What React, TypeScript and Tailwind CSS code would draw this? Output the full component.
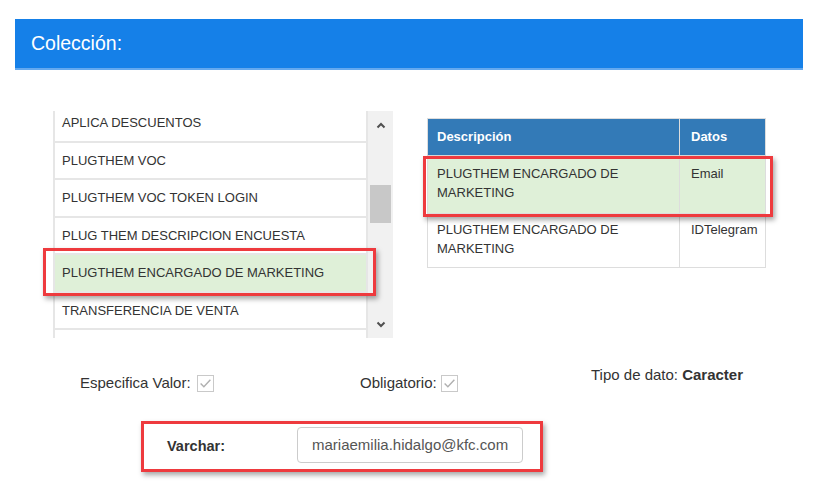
import React from 'react';

const items = [
  'APLICA DESCUENTOS',
  'PLUGTHEM VOC',
  'PLUGTHEM VOC TOKEN LOGIN',
  'PLUG THEM DESCRIPCION ENCUESTA',
  'PLUGTHEM ENCARGADO DE MARKETING',
  'TRANSFERENCIA DE VENTA',
  '',
];

const rows = [
  { desc: 'PLUGTHEM ENCARGADO DE MARKETING', datos: 'Email', active: true },
  { desc: 'PLUGTHEM ENCARGADO DE MARKETING', datos: 'IDTelegram', active: false },
];

const Chevron: React.FC<{ up?: boolean }> = ({ up }) => (
  <svg width="10" height="7" viewBox="0 0 10 7">
    <polyline
      points={up ? '1.5,5.5 5,2 8.5,5.5' : '1.5,1.5 5,5 8.5,1.5'}
      fill="none"
      stroke="#505050"
      strokeWidth="2"
    />
  </svg>
);

const DisabledCheck: React.FC = () => (
  <span className="inline-flex h-[17px] w-[17px] items-center justify-center border border-[#c9c9c9] bg-white">
    <svg width="13" height="11" viewBox="0 0 12 10">
      <polyline points="1.5,5 4.5,8 10.5,1.5" fill="none" stroke="#b0b0b0" strokeWidth="1.3" />
    </svg>
  </span>
);

export default function App() {
  return (
    <div className="h-[498px] w-[830px] overflow-hidden bg-white pt-[19px] font-['Liberation_Sans',Arial,sans-serif] text-[#333]">
      {/* Header */}
      <div className="ml-[15px] flex h-[51px] w-[788px] items-center border-b-2 border-[#64a9ef] bg-[#1580e8] pl-[16px]">
        <span className="text-[19.5px] text-white">Colección:</span>
      </div>

      {/* List + table */}
      <div className="mt-[41px] flex items-start">
        <div className="relative ml-[53px] flex h-[227px] w-[340px]">
          <div className="h-full w-[315px] overflow-hidden border-l-2 border-r-2 border-[#e6e6e6]">
            <ul className="-mt-[6px]">
              {items.map((item, i) => {
                const active = item === 'PLUGTHEM ENCARGADO DE MARKETING';
                return (
                  <li
                    key={i}
                    className={`flex h-[37.5px] items-center border-b-2 border-[#e6e6e6] pl-[7px] text-[13px] ${
                      active ? 'bg-[#dff0d8]' : 'bg-white'
                    }`}
                  >
                    {item}
                  </li>
                );
              })}
            </ul>
          </div>
          <div className="flex h-full w-[25px] flex-col items-center bg-[#f1f1f1] pt-[11px]">
            <Chevron up />
            <div className="mt-[56px] h-[38px] w-[21px] bg-[#c8c8c8]" />
            <div className="flex-1" />
            <div className="mb-[10px]">
              <Chevron />
            </div>
          </div>
          {/* highlight annotation */}
          <span className="absolute -left-[10px] top-[137px] h-[48px] w-[333px] border-[3px] border-[#ee3a3e] shadow-[2px_3px_5px_rgba(0,0,0,0.35)]" />
        </div>

        <div className="relative ml-[34px] mt-[7px] w-[339px]">
          <table className="w-full table-fixed border-collapse text-[13px]">
            <colgroup>
              <col className="w-[252px]" />
              <col />
            </colgroup>
            <thead>
              <tr className="h-[37px] bg-[#337ab7] text-left text-white">
                <th className="border border-[#dddddd] px-[9px] font-bold">Descripción</th>
                <th className="border border-[#dddddd] px-[11px] font-bold">Datos</th>
              </tr>
            </thead>
            <tbody>
              {rows.map((r, i) => (
                <tr key={i} className={r.active ? 'bg-[#dff0d8]' : 'bg-white'}>
                  <td className={`border border-[#dddddd] px-[9px] align-top leading-[19px] ${r.active ? 'pb-[11px] pt-[8px]' : 'pb-[9px] pt-[6px]'}`}>
                    PLUGTHEM ENCARGADO DE
                    <br />
                    MARKETING
                  </td>
                  <td className={`whitespace-nowrap border border-[#dddddd] px-[11px] align-top leading-[19px] ${r.active ? 'pt-[8px]' : 'pt-[6px]'}`}>
                    {r.datos}
                  </td>
                </tr>
              ))}
            </tbody>
          </table>
          <span className="absolute -left-[4px] top-[38px] h-[61px] w-[350px] border-[3px] border-[#ee3a3e] shadow-[2px_3px_5px_rgba(0,0,0,0.35)]" />
        </div>
      </div>

      {/* Checkbox row */}
      <div className="mt-[27px] flex items-start text-[15px] leading-[20px]">
        <div className="ml-[80px] flex w-[280px] items-center gap-[6px] pt-[8px]">
          <span>Especifica Valor:</span>
          <DisabledCheck />
        </div>
        <div className="flex w-[231px] items-center gap-[4px] pt-[8px]">
          <span>Obligatorio:</span>
          <DisabledCheck />
        </div>
        <div>
          Tipo de dato: <span className="font-bold">Caracter</span>
        </div>
      </div>

      {/* Varchar */}
      <div className="ml-[141px] mt-[28px] flex h-[51px] w-[402px] items-start border-[3px] border-[#ee3a3e] pl-[23px] pt-[3px] shadow-[2px_3px_5px_rgba(0,0,0,0.35)]">
        <span className="mt-[11px] w-[130px] text-[14.5px] font-bold leading-[16px]">Varchar:</span>
        <div className="flex h-[36px] w-[226px] items-center rounded-[4px] border border-[#cccccc] px-[14px] text-[15px] text-[#555]">
          mariaemilia.hidalgo@kfc.com
        </div>
      </div>
    </div>
  );
}
